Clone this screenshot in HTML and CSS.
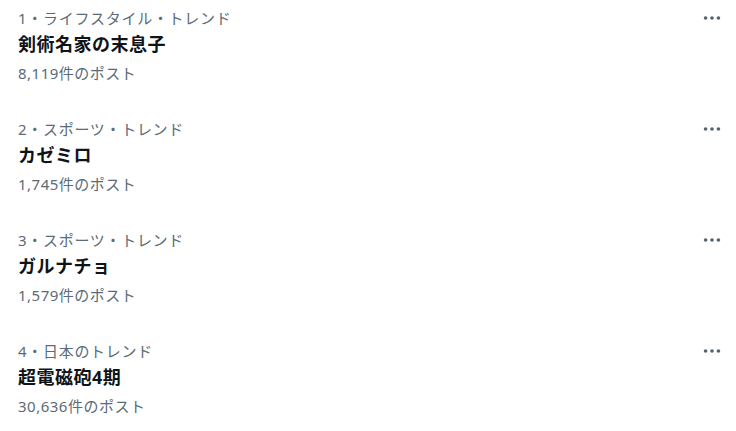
FILE: index.html
```html
<!DOCTYPE html>
<html lang="ja">
<head>
<meta charset="utf-8">
<link rel="stylesheet" href="styles.css">
</head>
<body>
<div class="list">
  <div class="trend">
    <div class="body">
      <div class="meta">1・ライフスタイル・トレンド</div>
      <div class="title">剣術名家の末息子</div>
      <div class="count">8,119件のポスト</div>
    </div>
    <svg class="more" viewBox="0 0 24 24" width="22" height="22"><circle cx="5" cy="12" r="2"/><circle cx="12" cy="12" r="2"/><circle cx="19" cy="12" r="2"/></svg>
  </div>
  <div class="trend">
    <div class="body">
      <div class="meta">2・スポーツ・トレンド</div>
      <div class="title">カゼミロ</div>
      <div class="count">1,745件のポスト</div>
    </div>
    <svg class="more" viewBox="0 0 24 24" width="22" height="22"><circle cx="5" cy="12" r="2"/><circle cx="12" cy="12" r="2"/><circle cx="19" cy="12" r="2"/></svg>
  </div>
  <div class="trend">
    <div class="body">
      <div class="meta">3・スポーツ・トレンド</div>
      <div class="title">ガルナチョ</div>
      <div class="count">1,579件のポスト</div>
    </div>
    <svg class="more" viewBox="0 0 24 24" width="22" height="22"><circle cx="5" cy="12" r="2"/><circle cx="12" cy="12" r="2"/><circle cx="19" cy="12" r="2"/></svg>
  </div>
  <div class="trend">
    <div class="body">
      <div class="meta">4・日本のトレンド</div>
      <div class="title">超電磁砲4期</div>
      <div class="count">30,636件のポスト</div>
    </div>
    <svg class="more" viewBox="0 0 24 24" width="22" height="22"><circle cx="5" cy="12" r="2"/><circle cx="12" cy="12" r="2"/><circle cx="19" cy="12" r="2"/></svg>
  </div>
</div>
</body>
</html>
```
FILE: styles.css
```css
html, body {
  margin: 0;
  padding: 0;
  background: #ffffff;
}
body {
  font-family: "Noto Sans", "Noto Sans CJK JP", sans-serif;
}
.list {
  display: flex;
  flex-direction: column;
}
.trend {
  display: flex;
  justify-content: space-between;
  align-items: flex-start;
  height: 111px;
  box-sizing: border-box;
  padding: 8px 13px 0 18px;
}
.body {
  display: flex;
  flex-direction: column;
}
.meta {
  font-size: 15px;
  line-height: 20px;
  letter-spacing: 0.7px;
  color: #5b6b78;
}
.title {
  margin-top: 4px;
  font-size: 18px;
  line-height: 24px;
  font-weight: 700;
  letter-spacing: 0.5px;
  color: #0f1419;
}
.count {
  margin-top: 5px;
  font-size: 15px;
  line-height: 24px;
  letter-spacing: 0.5px;
  color: #5b6b78;
}
.more {
  fill: #536471;
  margin-top: -1px;
}
```
